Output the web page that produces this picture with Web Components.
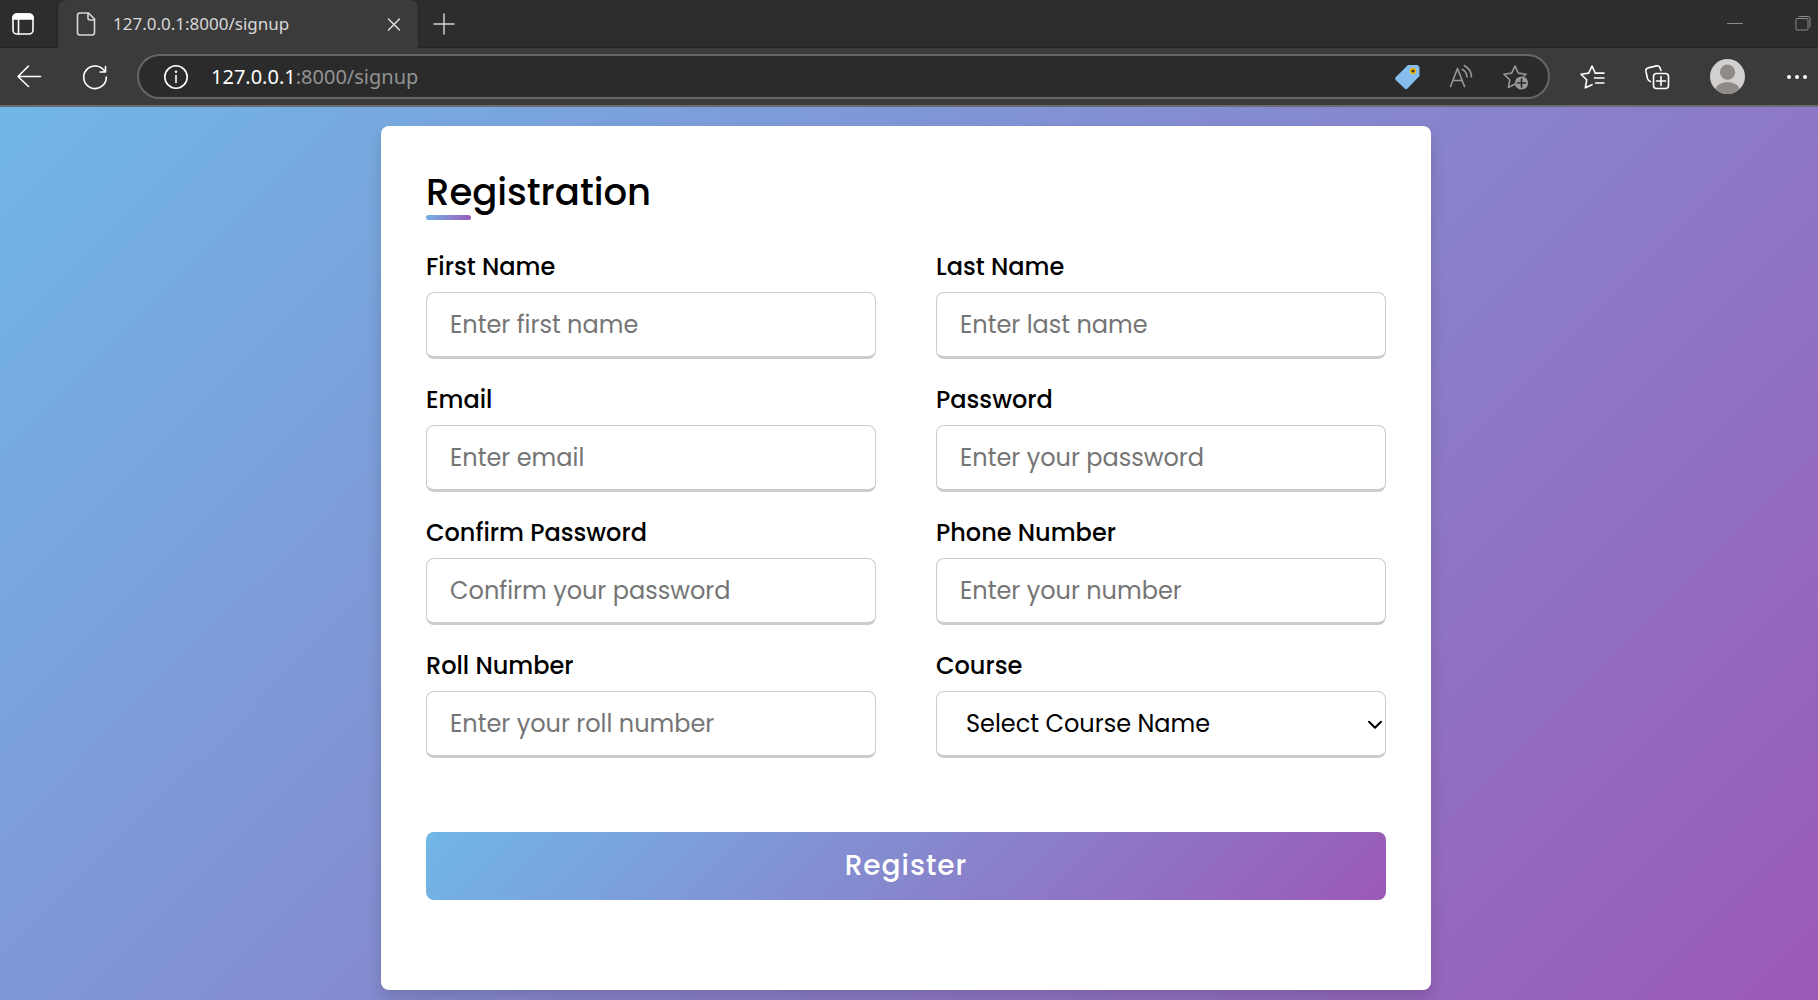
<!DOCTYPE html>
<html lang="en">
<head>
<meta charset="utf-8">
<title>127.0.0.1:8000/signup</title>
<style>
  html, body { margin: 0; height: 100%; }
  body { font-family: Poppins, Inter, sans-serif; color: #000; }
</style>
</head>
<body>
<app-window>
  <browser-tabs slot="chrome">127.0.0.1:8000/signup</browser-tabs>
  <browser-toolbar slot="chrome"><span slot="host">127.0.0.1</span><span slot="path">:8000/signup</span></browser-toolbar>
  <signup-card heading="Registration">
    <form-field label="First Name" placeholder="Enter first name"></form-field>
    <form-field label="Last Name" placeholder="Enter last name"></form-field>
    <form-field label="Email" type="email" placeholder="Enter email"></form-field>
    <form-field label="Password" type="password" placeholder="Enter your password"></form-field>
    <form-field label="Confirm Password" type="password" placeholder="Confirm your password"></form-field>
    <form-field label="Phone Number" type="tel" placeholder="Enter your number"></form-field>
    <form-field label="Roll Number" placeholder="Enter your roll number"></form-field>
    <select-field label="Course" placeholder="Select Course Name"></select-field>
    <submit-button slot="action">Register</submit-button>
  </signup-card>
</app-window>

<script>
const ICONS = {
  layout: '<rect x="2" y="2" width="20" height="20" rx="4"/><path d="M2 7V6a4 4 0 0 1 4-4h12a4 4 0 0 1 4 4v1z" fill="currentColor"/><path d="M7.500 7v15"/>',
  page: '<path d="M6 1h8.500l6 6v13.500a2.500 2.500 0 0 1-2.500 2.500H6a2.500 2.500 0 0 1-2.500-2.500v-17A2.500 2.500 0 0 1 6 1zM14 1v5a2 2 0 0 0 2 2h4.500"/>',
  close: '<path d="M6.500 7l11 11M17.500 7l-11 11"/>',
  plus: '<path d="M12 2v20M2 12h20" stroke-width="1.400"/>',
  back: '<path d="M11.500 1L1 11.500l10.500 10M1 11.500h22.500"/>',
  reload: '<path d="M22.500 7V1.500M22.500 7H17M22 7A11.300 11.300 0 1 0 23.300 12"/>',
  info: '<circle cx="12" cy="12" r="11.200"/><path d="M12 10.500v7"/><circle cx="12" cy="6.800" r="1.200" fill="currentColor" stroke="none"/>',
  tag: '<path d="M13 0h9.500L24.500 2v9L12.500 23.500a2 2 0 0 1-2.800 0L.7 15a2 2 0 0 1 0-2.800z" fill="#85beee" stroke="none"/><circle cx="18" cy="6" r="3.200" fill="#f2b705" stroke="none"/><circle cx="18" cy="6" r="1.600" fill="#333" stroke="none"/>',
  read: '<path d="M1.500 21.500L8.500 3.500l7 18M4 15.500h9M13.500 4.500a9 9 0 0 1 4.500 7.500M15.500.7a13 13 0 0 1 7 11.300"/>',
  starplus: '<path d="M7 21.500l-1.500.8 1.200-7.500L1 9.200l7.700-1.100L12 1l3.300 7.100L23 9.200l-2 1.800M12 19l-3.500 2" /><circle cx="18.500" cy="18" r="6.600" fill="currentColor" stroke="none"/><path d="M18.500 14v8M14.500 18h8" stroke="#2b2b2b" stroke-width="1.700"/>',
  starlist: '<path d="M12 19.700l-6.700 3.100 1.400-8L1 9.200l7.700-1.100L12 1l3.300 7.100M15 8.100h9M14.500 13h9.500M15.500 18H24"/>',
  collections: '<rect x="8.500" y="8.500" width="15" height="15" rx="3"/><path d="M16 11.500v9M11.500 16h9M5.500 16.500c-1.800-.3-2.500-1.500-3-3L.9 6.200C.6 4.500 1.500 3.300 3 2.900L11.500.9c1.700-.4 3 .3 3.500 2L16 5.500"/>',
  more: '<g fill="currentColor" stroke="none"><circle cx="3" cy="12" r="2"/><circle cx="11" cy="12" r="2"/><circle cx="19" cy="12" r="2"/></g>',
  avatar: '<clipPath id="c"><circle cx="12" cy="12" r="12"/></clipPath><g stroke="none" clip-path="url(#c)"><path fill="#d2d0ce" d="M0 0h24v24H0z"/><circle cx="12" cy="9" r="5.200" fill="#8f8a87"/><ellipse cx="12" cy="22" rx="8.500" ry="6.300" fill="#8f8a87"/></g>',
  minimize: '<path d="M4.500 11.500h15" stroke-width="1"/>',
  restore: '<path d="M5 6.500h10a1 1 0 0 1 1 1V17a1 1 0 0 1-1 1H5a1 1 0 0 1-1-1V7.500a1 1 0 0 1 1-1zM7 4.500h9a2 2 0 0 1 2 2V15" stroke-width="1"/>',
  chevron: '<path d="M5.500 8.500l6.500 6.500 6.500-6.500" stroke-width="2.200"/>'
};

class BaseElement extends HTMLElement {
  render(css, html) {
    this.attachShadow({ mode: 'open' }).innerHTML = `<style>:host,*{box-sizing:border-box}${css}</style>${html}`;
  }
}

customElements.define('ui-icon', class extends BaseElement {
  connectedCallback() {
    if (this.shadowRoot) return;
    this.render(`:host{display:block;flex:none;width:24px;height:24px}svg{display:block;width:100%;height:100%;overflow:visible}`,
      `<svg viewBox="0 0 24 24" fill="none" stroke="currentColor" stroke-width="1.600" stroke-linecap="round" stroke-linejoin="round" aria-hidden="true">${ICONS[this.getAttribute('name')]}</svg>`);
  }
});

customElements.define('app-window', class extends BaseElement {
  connectedCallback() {
    this.render(`
      :host{display:flex;flex-direction:column;min-height:100vh}
      main{flex:1;display:flex;justify-content:center;align-items:flex-start;padding:19px 12px 10px 6px;
        background:linear-gradient(135deg,#71b7e6,#9b59b6)}`,
      `<slot name="chrome"></slot><main><slot></slot></main>`);
  }
});

const BUTTON = `button{display:block;border:0;padding:0;background:none;color:inherit;font:inherit}`;

customElements.define('browser-tabs', class extends BaseElement {
  connectedCallback() {
    this.render(`${BUTTON}
      :host{display:flex;align-items:center;justify-content:space-between;height:48px;background:#2d2d2d;color:#fff;
        font-family:"Segoe UI","Noto Sans",sans-serif;box-shadow:inset 0 -1px #242424}
      .left{display:flex;align-items:center;height:100%;padding-left:11px}
      .tab{display:flex;align-items:center;width:360px;height:100%;margin:0 14px 0 23px;padding:0 12px 0 16px;
        border-radius:8px 8px 0 0;background:#3b3b3b;color:#d8d8d8;box-shadow:0 0 3px #1c1c1c;clip-path:inset(0 -4px 0 -4px)}
      .title{flex:1;padding-left:15px;font-size:17px;line-height:24px}
      .new{color:#d8d8d8}
      .window{display:flex;gap:45px;padding-right:2px;color:#8c8c8c}`,
      `<div class="left"><button aria-label="Tab actions"><ui-icon name="layout"></ui-icon></button>
        <div class="tab"><ui-icon name="page"></ui-icon><span class="title"><slot></slot></span>
          <button aria-label="Close tab"><ui-icon name="close"></ui-icon></button></div>
        <button class="new" aria-label="New tab"><ui-icon name="plus"></ui-icon></button></div>
      <div class="window"><button aria-label="Minimize"><ui-icon name="minimize"></ui-icon></button>
        <button aria-label="Restore"><ui-icon name="restore"></ui-icon></button></div>`);
  }
});

customElements.define('browser-toolbar', class extends BaseElement {
  connectedCallback() {
    this.render(`${BUTTON}
      :host{display:flex;align-items:center;gap:30px;height:59px;padding:0 8px 0 17px;background:#3b3b3b;color:#fff;
        border-bottom:2px solid #6b6b6b;font-family:"Segoe UI","Noto Sans",sans-serif}
      .group{display:flex;align-items:center;gap:42px}
      .tools{gap:41px}
      .address{flex:1;display:flex;align-items:center;height:45px;padding:0 21px 0 25px;
        border:2px solid #666;border-radius:23px;background:#2b2b2b}
      .url{flex:1;padding-left:23px;font-size:20px;line-height:28px;white-space:nowrap}
      .path{color:#929292}
      .actions{display:flex;gap:30px;color:#999}
      .avatar{width:35px;height:35px}`,
      `<div class="group"><button aria-label="Back"><ui-icon name="back"></ui-icon></button>
        <button aria-label="Reload"><ui-icon name="reload"></ui-icon></button></div>
      <div class="address"><button aria-label="Site information"><ui-icon name="info"></ui-icon></button>
        <div class="url" role="textbox" contenteditable="true" spellcheck="false" aria-label="Address"><slot name="host"></slot><span class="path"><slot name="path"></slot></span></div>
        <div class="actions"><button aria-label="Shopping"><ui-icon name="tag"></ui-icon></button>
          <button aria-label="Read aloud"><ui-icon name="read"></ui-icon></button>
          <button aria-label="Add to favorites"><ui-icon name="starplus"></ui-icon></button></div></div>
      <div class="group tools"><button aria-label="Favorites"><ui-icon name="starlist"></ui-icon></button>
        <button aria-label="Collections"><ui-icon name="collections"></ui-icon></button>
        <button aria-label="Profile"><ui-icon class="avatar" name="avatar"></ui-icon></button>
        <button aria-label="More"><ui-icon name="more"></ui-icon></button></div>`);
  }
});

customElements.define('signup-card', class extends BaseElement {
  connectedCallback() {
    this.render(`
      :host{display:block;width:100%;max-width:1050px;padding:38px 45px 90px;border-radius:8px;
        background:#fff;box-shadow:0 8px 15px rgba(0,0,0,.15)}
      h1{position:relative;margin:0 0 29px;font-size:37px;font-weight:500;line-height:56px}
      h1::before{content:"";position:absolute;left:0;bottom:0;width:45px;height:5px;border-radius:8px;
        background:linear-gradient(135deg,#71b7e6,#9b59b6)}
      .fields{display:grid;grid-template-columns:repeat(auto-fit,minmax(360px,1fr));gap:23px 60px;margin-bottom:74px}`,
      `<h1>${this.getAttribute('heading')}</h1><form><div class="fields"><slot></slot></div><slot name="action"></slot></form>`);
  }
});

const FIELD = `
  :host{display:block}
  label{display:block;margin-bottom:7px;font-size:24px;font-weight:500;line-height:36px}
  input,select{display:block;width:100%;height:67px;margin:0;padding:0 23px;border:1px solid #ccc;border-bottom-width:3px;
    border-radius:8px;outline:0;background:#fff;color:#000;font:inherit;font-size:24px}
  input::placeholder{color:#757575;opacity:1}`;

customElements.define('form-field', class extends BaseElement {
  connectedCallback() {
    this.render(FIELD, `<label for="f">${this.getAttribute('label')}</label>
      <input id="f" type="${this.getAttribute('type') || 'text'}" placeholder="${this.getAttribute('placeholder')}">`);
  }
});

customElements.define('select-field', class extends BaseElement {
  connectedCallback() {
    this.render(`${FIELD}
      .box{display:grid;align-items:center}
      .box>*{grid-area:1/1}
      select{appearance:none;padding-left:29px}
      ui-icon{justify-self:end;width:22px;height:22px;pointer-events:none}`,
      `<label for="f">${this.getAttribute('label')}</label>
      <div class="box"><select id="f"><option>${this.getAttribute('placeholder')}</option></select><ui-icon name="chevron"></ui-icon></div>`);
  }
});

customElements.define('submit-button', class extends BaseElement {
  connectedCallback() {
    this.render(`:host{display:block}
      button{display:block;width:100%;height:68px;border:0;border-radius:8px;color:#fff;font:inherit;font-size:28px;
        font-weight:500;letter-spacing:1px;background:linear-gradient(135deg,#71b7e6,#9b59b6)}`,
      `<button type="button"><slot></slot></button>`);
  }
});
</script>
</body>
</html>
